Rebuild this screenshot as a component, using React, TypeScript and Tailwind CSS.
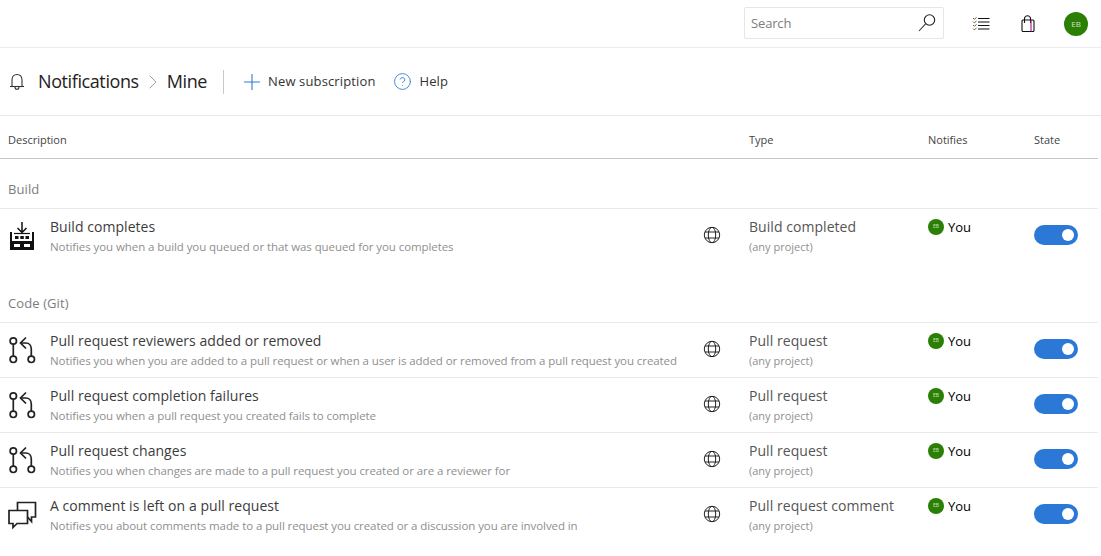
import React from "react";
import { Plus, ChevronRight, CircleHelp } from "lucide-react";

const BuildIcon = () => (
  <svg width="28" height="30" viewBox="0 0 28 30" fill="none">
    <path d="M14 0v10M9.500 6l4.500 4.500L18.500 6" stroke="#111" strokeWidth="1.500" />
    <path d="M6 11.500h16" stroke="#111" strokeWidth="1.200" />
    <path d="M2 10h2v9H2zM24 10h2v9h-2z" fill="#111" />
    <path d="M7 14h3.500v3H7zM12.300 14h3.500v3h-3.500zM17.500 14H21v3h-3.500z" fill="#111" />
    <path d="M2 19h24v9H2z" fill="#111" />
    <path d="M6 22h6v3H6zM16 22h6v3h-6z" fill="#fff" />
  </svg>
);

const PullIcon = () => (
  <svg width="28" height="30" viewBox="0 0 28 30" fill="none" stroke="#222" strokeWidth="1.700">
    <circle cx="5.300" cy="5" r="3.200" />
    <circle cx="5.300" cy="23.300" r="3.200" />
    <circle cx="23.300" cy="23.300" r="3.200" />
    <path d="M5.300 8.200v11.900" />
    <path d="M23.300 20.100V13c0-3.500-2-6-5.500-6H13" />
    <path d="M18 1.500 12.500 7l5.500 5.500" />
  </svg>
);

const CommentIcon = () => (
  <svg width="30" height="30" viewBox="0 0 30 30" fill="none" stroke="#222" strokeWidth="1.700">
    <path d="M9.500 9V1.500H27.500V16H23.500V20.500L19.500 16" />
    <path d="M1 9.500H19.500V22.500H9L5 26.500V22.500H1z" />
  </svg>
);

const ListIcon = () => (
  <svg width="18" height="14" viewBox="0 0 18 14" fill="none">
    <path d="M6 1.500h11.500M6 5h11.500M6 8.500h11.500M6 12h11.500" stroke="#111" strokeWidth="1.200" />
    <path d="M1 1 2.300 2.300 4.500.5M1 4.500 2.300 5.800 4.500 4M1 8l1.300 1.300L4.500 7.500M1 11.500l1.300 1.300L4.500 11" stroke="#6b5a3a" strokeWidth="1" />
  </svg>
);

const BagIcon = () => (
  <svg width="14" height="17" viewBox="0 0 14 17" fill="none" stroke="#111" strokeWidth="1.100">
    <rect x="1" y="5" width="12" height="11.500" rx="1" />
    <path d="M3.500 8V3.500C3.500 2 5 .7 6.500.7S9.500 2 9.500 3.500V8" />
    <path d="M10 5v11.500" stroke="#a0148c" />
  </svg>
);

const SearchGlyph = () => (
  <svg width="20" height="20" viewBox="0 0 20 20" fill="none" stroke="#222" strokeWidth="1.100">
    <circle cx="12.500" cy="7" r="5.200" />
    <path d="M8.800 10.700 2 18" stroke="#334" />
  </svg>
);

const BellGlyph = () => (
  <svg width="16" height="18" viewBox="0 0 16 18" fill="none" stroke="#333" strokeWidth="1.100">
    <path d="M3 13V7c0-3.500 2-5.500 5-5.500S13 3.500 13 7v6" />
    <path d="M1 13.500h14" />
    <path d="M6 14c0 1.500 1 2.300 2 2.300s2-.8 2-2.300" />
  </svg>
);

const GlobeGlyph = () => (
  <svg width="18" height="18" viewBox="0 0 18 18" fill="none" stroke="#222" strokeWidth="1">
    <circle cx="9" cy="9" r="7.700" />
    <ellipse cx="9" cy="9" rx="3.700" ry="7.700" />
    <path d="M2 6h14M2 12h14" />
  </svg>
);

const Avatar = ({ big }: { big?: boolean }) =>
  big ? (
    <div className="flex h-6 w-6 items-center justify-center rounded-full bg-[#2b7f04] text-[8px] text-[#cfe3c4]">EB</div>
  ) : (
    <div className="flex h-4 w-4 items-center justify-center rounded-full bg-[#2b7f04] text-[5px] text-[#cfe3c4]">EB</div>
  );

interface RowProps {
  icon: React.ReactNode;
  title: string;
  desc: string;
  type: string;
}

const Row = ({ icon, title, desc, type }: RowProps) => (
  <div className="flex h-[55px] border-t border-[#eaeaea]">
    <div className="flex w-[50px] shrink-0 pl-2 pt-[13px]">{icon}</div>
    <div className="w-[645px] shrink-0 pt-[8px]">
      <div className="h-5 text-[14px] leading-5 tracking-[0.05px] text-[#3c3c3c]">{title}</div>
      <div className="mt-[2px] whitespace-nowrap text-[11.5px] leading-4 tracking-[-0.08px] text-[#8f8f8f]">{desc}</div>
    </div>
    <div className="w-[54px] shrink-0 pl-[8px] pt-[17px]">
      <GlobeGlyph />
    </div>
    <div className="w-[179px] shrink-0 pt-[8px]">
      <div className="h-5 text-[14px] leading-5 tracking-[0.05px] text-[#555]">{type}</div>
      <div className="mt-[2px] text-[11px] leading-4 text-[#8f8f8f]">(any project)</div>
    </div>
    <div className="flex w-[106px] shrink-0 items-start gap-[4px] pt-[10px]">
      <Avatar />
      <span className="text-[13px] leading-[17px] text-black">You</span>
    </div>
    <div className="pt-[16px]">
      <div className="flex h-5 w-11 items-center justify-end rounded-full bg-[#2b78d6] pr-[4px]">
        <div className="h-3 w-3 rounded-full bg-white" />
      </div>
    </div>
  </div>
);

const Group = ({ label }: { label: string }) => (
  <div className="flex h-[38px] items-center pl-2 text-[13px] leading-4 tracking-[0.1px] text-[#7d7d7d]">{label}</div>
);

const msgs = [
  {
    icon: <PullIcon />,
    title: "Pull request reviewers added or removed",
    desc: "Notifies you when you are added to a pull request or when a user is added or removed from a pull request you created",
    type: "Pull request",
  },
  {
    icon: <PullIcon />,
    title: "Pull request completion failures",
    desc: "Notifies you when a pull request you created fails to complete",
    type: "Pull request",
  },
  {
    icon: <PullIcon />,
    title: "Pull request changes",
    desc: "Notifies you when changes are made to a pull request you created or are a reviewer for",
    type: "Pull request",
  },
  {
    icon: <CommentIcon />,
    title: "A comment is left on a pull request",
    desc: "Notifies you about comments made to a pull request you created or a discussion you are involved in",
    type: "Pull request comment",
  },
];

export default function App() {
  return (
    <div className="h-[556px] w-[1101px] overflow-hidden bg-white font-['Open_Sans','Noto_Sans',sans-serif]">
      <div className="flex h-[48px] items-center justify-end border-b border-[#ececec] pr-[13px]">
        <div className="mb-[2px] mr-[28px] flex h-8 w-[200px] items-center justify-between rounded-[2px] border border-[#e6e6e6] pl-[6px] pr-[6px]">
          <span className="mt-[2px] text-[13px] tracking-[-0.15px] text-[#7d7d7d]">Search</span>
          <SearchGlyph />
        </div>
        <ListIcon />
        <div className="ml-[31px] mr-[29px] flex">
          <BagIcon />
        </div>
        <Avatar big />
      </div>

      <div className="flex h-[68px] items-center border-b border-[#e8e8e8] pl-[9px]">
        <BellGlyph />
        <span className="ml-[13px] text-[18px] tracking-[-0.4px] text-[#222]">Notifications</span>
        <ChevronRight size={24} strokeWidth={0.8} className="ml-[2px] text-[#888]" />
        <span className="ml-[2px] text-[18px] tracking-[-0.4px] text-[#222]">Mine</span>
        <div className="ml-[16px] h-6 w-px bg-[#c8c8c8]" />
        <Plus size={26} strokeWidth={1} className="ml-[15px] text-[#2b78d6]" />
        <span className="ml-[3px] text-[13px] tracking-[0.13px] text-[#333]">New subscription</span>
        <CircleHelp size={19} strokeWidth={1.1} className="ml-[18px] text-[#2b78d6]" />
        <span className="ml-[7px] text-[13px] tracking-[0.1px] text-[#333]">Help</span>
      </div>

      <div className="flex h-[43px] w-[1098px] items-center border-b border-[#c4c4c4] pt-[6px] text-[11px] text-[#444]">
        <div className="w-[749px] shrink-0 pl-2">Description</div>
        <div className="w-[179px] shrink-0">Type</div>
        <div className="w-[106px] shrink-0">Notifies</div>
        <div>State</div>
      </div>

      <div className="w-[1098px] pt-[11px]">
        <Group label="Build" />
        <Row
          icon={<BuildIcon />}
          title="Build completes"
          desc="Notifies you when a build you queued or that was queued for you completes"
          type="Build completed"
        />
        <div className="pt-[21px]">
          <Group label="Code (Git)" />
        </div>
        {msgs.map((m) => (
          <Row key={m.title} {...m} />
        ))}
      </div>
    </div>
  );
}
